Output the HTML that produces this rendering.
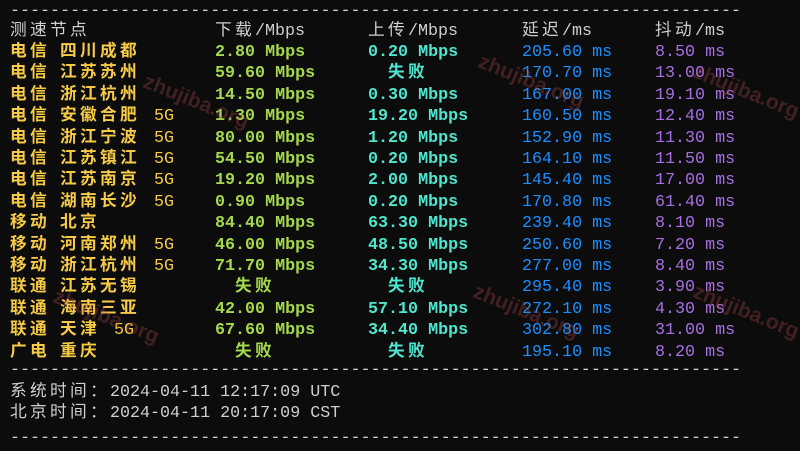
<!DOCTYPE html>
<html><head><meta charset="utf-8"><style>
body{margin:0;width:800px;height:451px;background:#0c0c0c;overflow:hidden;position:relative;font-family:"Liberation Mono","Noto Sans CJK SC",monospace;font-size:16.7px}
.r{position:absolute;left:0;width:800px;height:21px;line-height:21px;white-space:pre}
.r span{position:absolute;top:0}
.c{letter-spacing:3.3px}
.l{left:10px;color:#f7cb45;font-weight:bold}
.d{left:215px;color:#a5d84c;font-weight:bold}
.u{left:368px;color:#4fe6cf;font-weight:bold}
.p{left:522px;color:#1a8fff}
.j{left:655px;color:#a86fe3}
.h{color:#cfcfcf;font-weight:normal}
.w{position:absolute;color:rgba(190,80,85,.3);font-family:"Liberation Sans",sans-serif;font-size:21px;transform:rotate(22deg);white-space:nowrap;font-weight:bold}
.dash{position:absolute;left:10px;color:#cfcfcf;white-space:pre;line-height:21px}
</style></head><body>
<div class="dash" style="top:1px">-------------------------------------------------------------------------</div>
<div class="r" style="top:21px"><span class="l h c">测速节点</span><span class="d h"><span class="c" style="position:static">下载</span>/Mbps</span><span class="u h"><span class="c" style="position:static">上传</span>/Mbps</span><span class="p h" style="color:#cfcfcf"><span class="c" style="position:static">延迟</span>/ms</span><span class="j h" style="color:#cfcfcf"><span class="c" style="position:static">抖动</span>/ms</span></div>
<div id="rows"></div>
<script>
var R=[["电信 四川成都","","2.80 Mbps","0.20 Mbps","205.60 ms","8.50 ms"],
["电信 江苏苏州","","59.60 Mbps","F","170.70 ms","13.00 ms"],
["电信 浙江杭州","","14.50 Mbps","0.30 Mbps","167.00 ms","19.10 ms"],
["电信 安徽合肥","5G","1.30 Mbps","19.20 Mbps","160.50 ms","12.40 ms"],
["电信 浙江宁波","5G","80.00 Mbps","1.20 Mbps","152.90 ms","11.30 ms"],
["电信 江苏镇江","5G","54.50 Mbps","0.20 Mbps","164.10 ms","11.50 ms"],
["电信 江苏南京","5G","19.20 Mbps","2.00 Mbps","145.40 ms","17.00 ms"],
["电信 湖南长沙","5G","0.90 Mbps","0.20 Mbps","170.80 ms","61.40 ms"],
["移动 北京","","84.40 Mbps","63.30 Mbps","239.40 ms","8.10 ms"],
["移动 河南郑州","5G","46.00 Mbps","48.50 Mbps","250.60 ms","7.20 ms"],
["移动 浙江杭州","5G","71.70 Mbps","34.30 Mbps","277.00 ms","8.40 ms"],
["联通 江苏无锡","","F","F","295.40 ms","3.90 ms"],
["联通 海南三亚","","42.00 Mbps","57.10 Mbps","272.10 ms","4.30 ms"],
["联通 天津","5G","67.60 Mbps","34.40 Mbps","302.80 ms","31.00 ms"],
["广电 重庆","","F","F","195.10 ms","8.20 ms"]];
var h="";
R.forEach(function(r,i){var t=42+i*21.4;var n=r[0].split(" ");
var lab='<span class="l"><span class="c" style="position:absolute;left:0">'+n[0]+'</span><span class="c" style="position:absolute;left:50px">'+n[1]+'</span>'+(r[1]?'<span style="position:absolute;left:'+(60+n[1].length*20+4)+'px;font-weight:normal">'+r[1]+'</span>':'')+'</span>';
function f(v,cls,off){return v=="F"?'<span class="'+cls+' c" style="margin-left:'+off+'px">失败</span>':'<span class="'+cls+'">'+v+'</span>';}
h+='<div class="r" style="top:'+t+'px">'+lab+f(r[2],"d",20)+f(r[3],"u",20)+'<span class="p">'+r[4]+'</span><span class="j">'+r[5]+'</span></div>';});
document.getElementById("rows").innerHTML=h;
</script>
<div class="dash" style="top:360px">-------------------------------------------------------------------------</div>
<div class="r" style="top:382px;color:#cfcfcf"><span style="left:10px"><span class="c" style="position:static">系统时间：</span>2024-04-11 12:17:09 UTC</span></div>
<div class="r" style="top:403px;color:#cfcfcf"><span style="left:10px"><span class="c" style="position:static">北京时间：</span>2024-04-11 20:17:09 CST</span></div>
<div class="dash" style="top:428px">-------------------------------------------------------------------------</div>
<div class="w" style="left:140px;top:90px">zhujiba.org</div>
<div class="w" style="left:475px;top:70px">zhujiba.org</div>
<div class="w" style="left:690px;top:80px">zhujiba.org</div>
<div class="w" style="left:50px;top:305px">zhujiba.org</div>
<div class="w" style="left:470px;top:300px">zhujiba.org</div>
<div class="w" style="left:690px;top:300px">zhujiba.org</div>
</body></html>
